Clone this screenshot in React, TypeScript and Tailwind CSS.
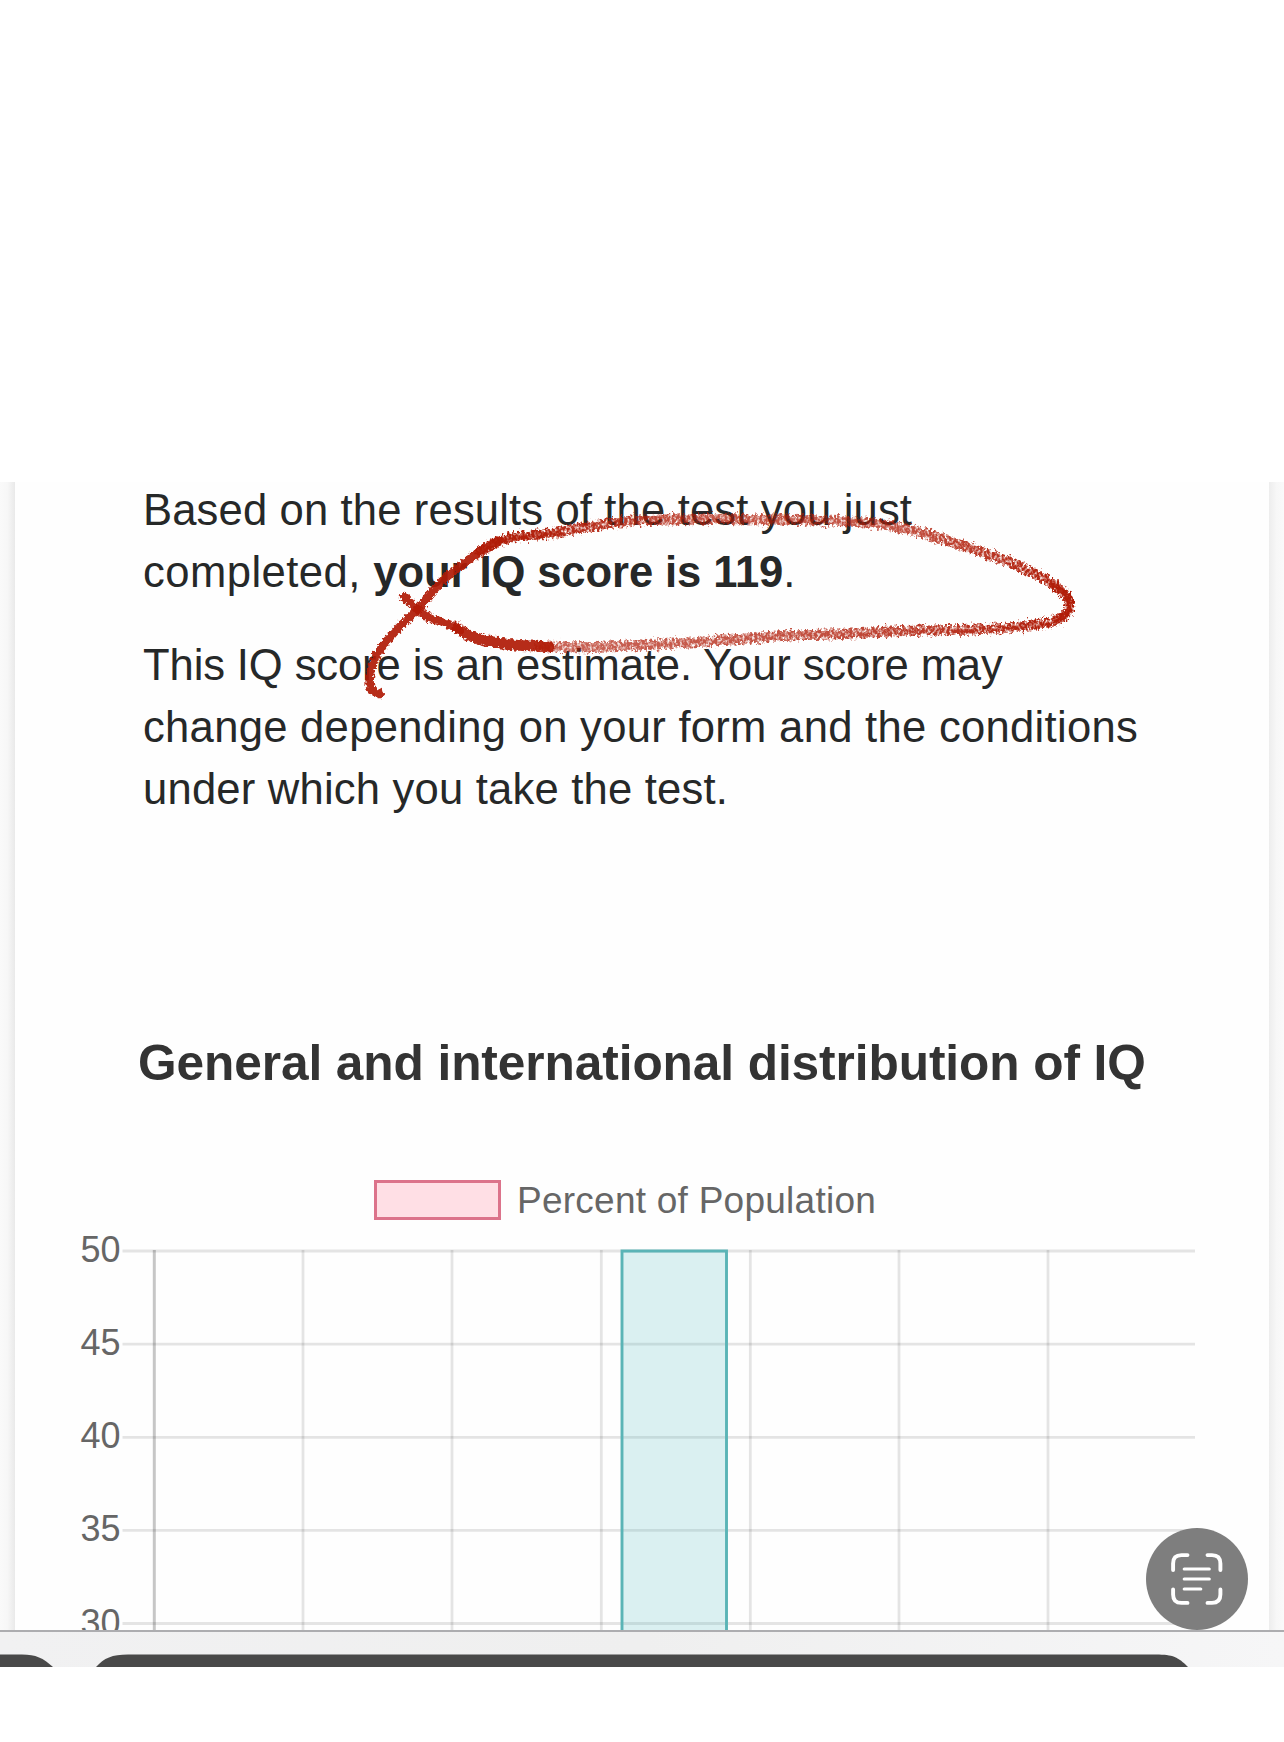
const xLines = [303, 452, 601.3, 750.3, 899, 1048];
const yTicks = [
  { label: '50', y: 1251 },
  { label: '45', y: 1344.2 },
  { label: '40', y: 1437.3 },
  { label: '35', y: 1530.4 },
  { label: '30', y: 1623.5 },
];

function Chart() {
  return (
    <svg className="block h-[406px] w-[1284px]" viewBox="0 1225 1284 406">
      {yTicks.map((t) => (
        <g key={t.label}>
          <line x1="122.5" x2="1195" y1={t.y} y2={t.y} stroke="#000" strokeOpacity="0.1" strokeWidth="2.8" />
          <text x="120.5" y={t.y + 11} textAnchor="end" fontSize="36" fill="#666" className="font-['Liberation_Sans',sans-serif]">
            {t.label}
          </text>
        </g>
      ))}
      <line x1="154.3" x2="154.3" y1="1250" y2="1631" stroke="#000" strokeOpacity="0.22" strokeWidth="3" />
      {xLines.map((x) => (
        <line key={x} x1={x} x2={x} y1="1250" y2="1631" stroke="#000" strokeOpacity="0.1" strokeWidth="2.8" />
      ))}
      <path d="M622 1640V1251H726.5V1640" fill="#4bb8c0" fillOpacity="0.2" stroke="#5ab4b6" strokeWidth="2.9" />
    </svg>
  );
}

function Marker() {
  return (
    <svg className="pointer-events-none absolute left-0 top-0 h-[240px] w-[1284px]" viewBox="0 482 1284 240" fill="none" stroke="#b01c08" strokeLinecap="round" strokeLinejoin="round">
      <defs>
        <filter id="crayon" filterUnits="userSpaceOnUse" x="340" y="490" width="760" height="230" colorInterpolationFilters="sRGB">
          <feTurbulence type="fractalNoise" baseFrequency="0.4 0.3" numOctaves="3" seed="4" result="n" />
          <feDisplacementMap in="SourceGraphic" in2="n" scale="10" xChannelSelector="R" yChannelSelector="G" result="d" />
          <feColorMatrix in="n" type="matrix" values="0 0 0 0 0  0 0 0 0 0  0 0 0 0 0  0 0 2.4 0 -0.35" result="a" />
          <feComposite in="d" in2="a" operator="in" result="g" />
          <feGaussianBlur in="g" stdDeviation="0.75" />
        </filter>
        <filter id="dense" filterUnits="userSpaceOnUse" x="340" y="490" width="760" height="230" colorInterpolationFilters="sRGB">
          <feTurbulence type="fractalNoise" baseFrequency="0.35" numOctaves="2" seed="8" result="n" />
          <feDisplacementMap in="SourceGraphic" in2="n" scale="7" xChannelSelector="R" yChannelSelector="G" result="d" />
          <feGaussianBlur in="d" stdDeviation="0.75" />
        </filter>
        <linearGradient id="fade" gradientUnits="userSpaceOnUse" x1="480" y1="0" x2="1070" y2="0">
          <stop offset="0" stopColor="#b01c08" stopOpacity="1" />
          <stop offset="0.2" stopColor="#b01c08" stopOpacity="0.9" />
          <stop offset="0.35" stopColor="#b01c08" stopOpacity="0.75" />
          <stop offset="0.7" stopColor="#b01c08" stopOpacity="0.75" />
          <stop offset="1" stopColor="#b01c08" stopOpacity="1" />
        </linearGradient>
        <linearGradient id="fadeLow" gradientUnits="userSpaceOnUse" x1="540" y1="0" x2="1070" y2="0">
          <stop offset="0" stopColor="#b01c08" stopOpacity="0.68" />
          <stop offset="0.55" stopColor="#b01c08" stopOpacity="0.78" />
          <stop offset="1" stopColor="#b01c08" stopOpacity="1" />
        </linearGradient>
      </defs>
      <g filter="url(#crayon)" strokeWidth="10">
        <path stroke="url(#fade)" d="M480 552C490 545 500 539 515 537C540 535 560 533 580 528C605 523 625 520 650 520C690 518 740 519 804 520C835 521 865 521 886 525C930 533 970 548 1010 562C1030 571 1043 578 1051 583C1062 590 1069 597 1070 604" />
        <path stroke="url(#fadeLow)" d="M1070 604C1069 613 1064 619 1050 622C1020 628 990 629 960 630C900 629 850 635 804 635C750 637 690 644 640 645C610 646 575 649 540 646" />
      </g>
      <g filter="url(#dense)" strokeWidth="8.5" strokeOpacity="0.93">
        <path d="M380 694L371 690C368 682 370 668 376 656C388 636 405 622 420 607C432 591 443 578 458 568C475 555 485 546 500 541" />
        <path d="M404 597C412 604 418 612 430 618C440 621 450 624 460 630" />
        <path strokeWidth="11" d="M457 628C466 636 480 640 500 643C518 647 534 645 549 647" />
        <path strokeWidth="5" strokeOpacity="0.6" d="M498 542C505 538 530 537 560 532" />
        <path strokeWidth="5" d="M1053 585Q1069 594 1070 604Q1069 613 1060 619" />
      </g>
    </svg>
  );
}

function ScanButton() {
  return (
    <button aria-label="Scan text" className="absolute left-[1146px] top-[1046px] flex size-[102px] items-center justify-center rounded-full bg-[#7e7e7e]">
      <svg className="size-[54px]" viewBox="0 0 54 54" fill="none" stroke="#fff" strokeWidth="3.9" strokeLinecap="round">
        <path d="M3.1 18V11.5Q3.1 3.1 11.5 3.1H17.5M37.5 3.1H42Q50.4 3.1 50.4 11.5V18M50.4 37.5V42.5Q50.4 50.9 42 50.9H37.5M17.5 50.9H11.5Q3.1 50.9 3.1 42.5V37.5" />
        <path strokeWidth="3.1" d="M14.2 17H39.3M14.2 27H39.3M14.2 37H30.8" />
      </svg>
    </button>
  );
}

export default function App() {
  return (
    <main className="h-[1742px] w-[1284px] overflow-hidden bg-white pt-[482px] font-['Liberation_Sans',sans-serif]">
      <div className="relative h-[1185px] w-full overflow-hidden bg-white">
        <div className="flex h-[1148px]">
          <div className="w-[15px] shrink-0 bg-linear-to-r from-[#fafafa] via-[#f7f7f7] to-[#e9e9e9]" />
          <section className="w-[1253.5px] shrink-0 overflow-hidden bg-[#fefefe]">
            <div className="whitespace-nowrap pl-[128px] text-[43.6px] leading-[62px] text-[#262828]">
              <p className="-mt-[3px]">
                <span className="block tracking-[0.14px]">Based on the results of the test you just</span>
                <span className="block tracking-[0.45px]">
                  completed, <strong className="font-bold tracking-[-0.1px]">your IQ score is 119</strong>.
                </span>
              </p>
              <p className="mt-[31px]">
                <span className="block tracking-[-0.12px]">This IQ score is an estimate. Your score may</span>
                <span className="block tracking-[0.28px]">change depending on your form and the conditions</span>
                <span className="block tracking-[0.2px]">under which you take the test.</span>
              </p>
            </div>
            <h2 className="mt-[208px] whitespace-nowrap pl-[123px] text-[49.6px] font-bold leading-[70px] tracking-[-0.08px] text-[#333]">General and international distribution of IQ</h2>
            <div className="mt-[82px] flex h-[40px] items-center pl-[358.5px]">
              <span className="h-[40px] w-[127.5px] border-[3px] border-[#dc738b] bg-[#ffdfe5]" />
              <span className="ml-[16px] whitespace-nowrap pt-[2px] text-[37px] leading-[40px] tracking-[0.25px] text-[#666]">Percent of Population</span>
            </div>
            <div className="-ml-[15px] mt-[5px]">
              <Chart />
            </div>
          </section>
          <div className="grow bg-linear-to-r from-[#ededed] via-[#f7f7f7] to-[#fafafa]" />
        </div>
        <footer className="h-[37px] border-t-2 border-[#adadb0] bg-linear-to-r from-[#f1f1f2] via-[#efefef] to-[#f6f6f7]">
          <svg className="block h-[35px] w-full" viewBox="0 0 1284 35" fill="#494949">
            <path d="M0 22.5H22C36 22.5 43 26 53 35H0Z" />
            <path d="M96 35C104 26 112 22.5 128 22.5H1156C1173 22.5 1178 25 1188 35Z" />
          </svg>
        </footer>
        <Marker />
        <ScanButton />
      </div>
    </main>
  );
}
